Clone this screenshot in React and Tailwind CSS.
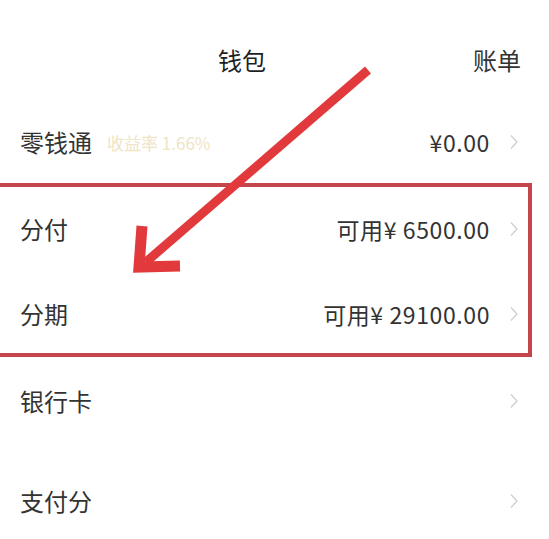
const font = { fontFamily: '"Noto Sans CJK SC", "Noto Sans", sans-serif' };

const Chevron = () => (
  <svg width="10" height="16" viewBox="0 0 10 16" className="shrink-0">
    <path d="M2 1.5 L8 8 L2 14.5" fill="none" stroke="#cfcfcf" strokeWidth="1.3" />
  </svg>
);

const Row = ({ label, value, extra, className = '' }) => (
  <div className={`flex items-center h-[44px] ${className}`}>
    <span className="text-[24px] text-[#333] leading-none">{label}</span>
    {extra && <span className="ml-[15px] text-[17px] text-[#efe4c6] leading-none">{extra}</span>}
    <div className="flex-1" />
    {value && <span className="text-[23px] text-[#333] leading-none tracking-[0.6px] mr-[19px]">{value}</span>}
    <Chevron />
  </div>
);

export default function App() {
  return (
    <div className="relative w-[549px] h-[539px] bg-white overflow-hidden" style={font}>
      <div className="relative h-[120px] flex items-center pl-[218px]">
        <span className="text-[24px] text-[#1f1f1f] font-normal leading-none">钱包</span>
        <span className="absolute right-[28px] top-[48px] text-[24px] text-[#333] leading-none">账单</span>
      </div>

      <Row label="零钱通" extra="收益率 1.66%" value="¥0.00" className="pl-[20px] pr-[30px]" />

      <div className="mt-[19px] w-[532px] border-4 border-l-0 border-[#c4464c] flex flex-col pt-[20px] pb-[17px] gap-[41px]">
        <Row label="分付" value="可用¥ 6500.00" className="pl-[20px] pr-[9px]" />
        <Row label="分期" value="可用¥ 29100.00" className="pl-[20px] pr-[9px]" />
      </div>

      <Row label="银行卡" className="mt-[22px] pl-[20px] pr-[30px]" />
      <Row label="支付分" className="mt-[56px] pl-[20px] pr-[30px]" />

      <svg className="absolute inset-0 pointer-events-none" width="549" height="539">
        <line x1="368" y1="70" x2="146" y2="262" stroke="#e23a3c" strokeWidth="9" />
        <polyline points="142,226 139,267 180,266" fill="none" stroke="#e23a3c" strokeWidth="11" strokeLinejoin="miter" />
      </svg>
    </div>
  );
}
